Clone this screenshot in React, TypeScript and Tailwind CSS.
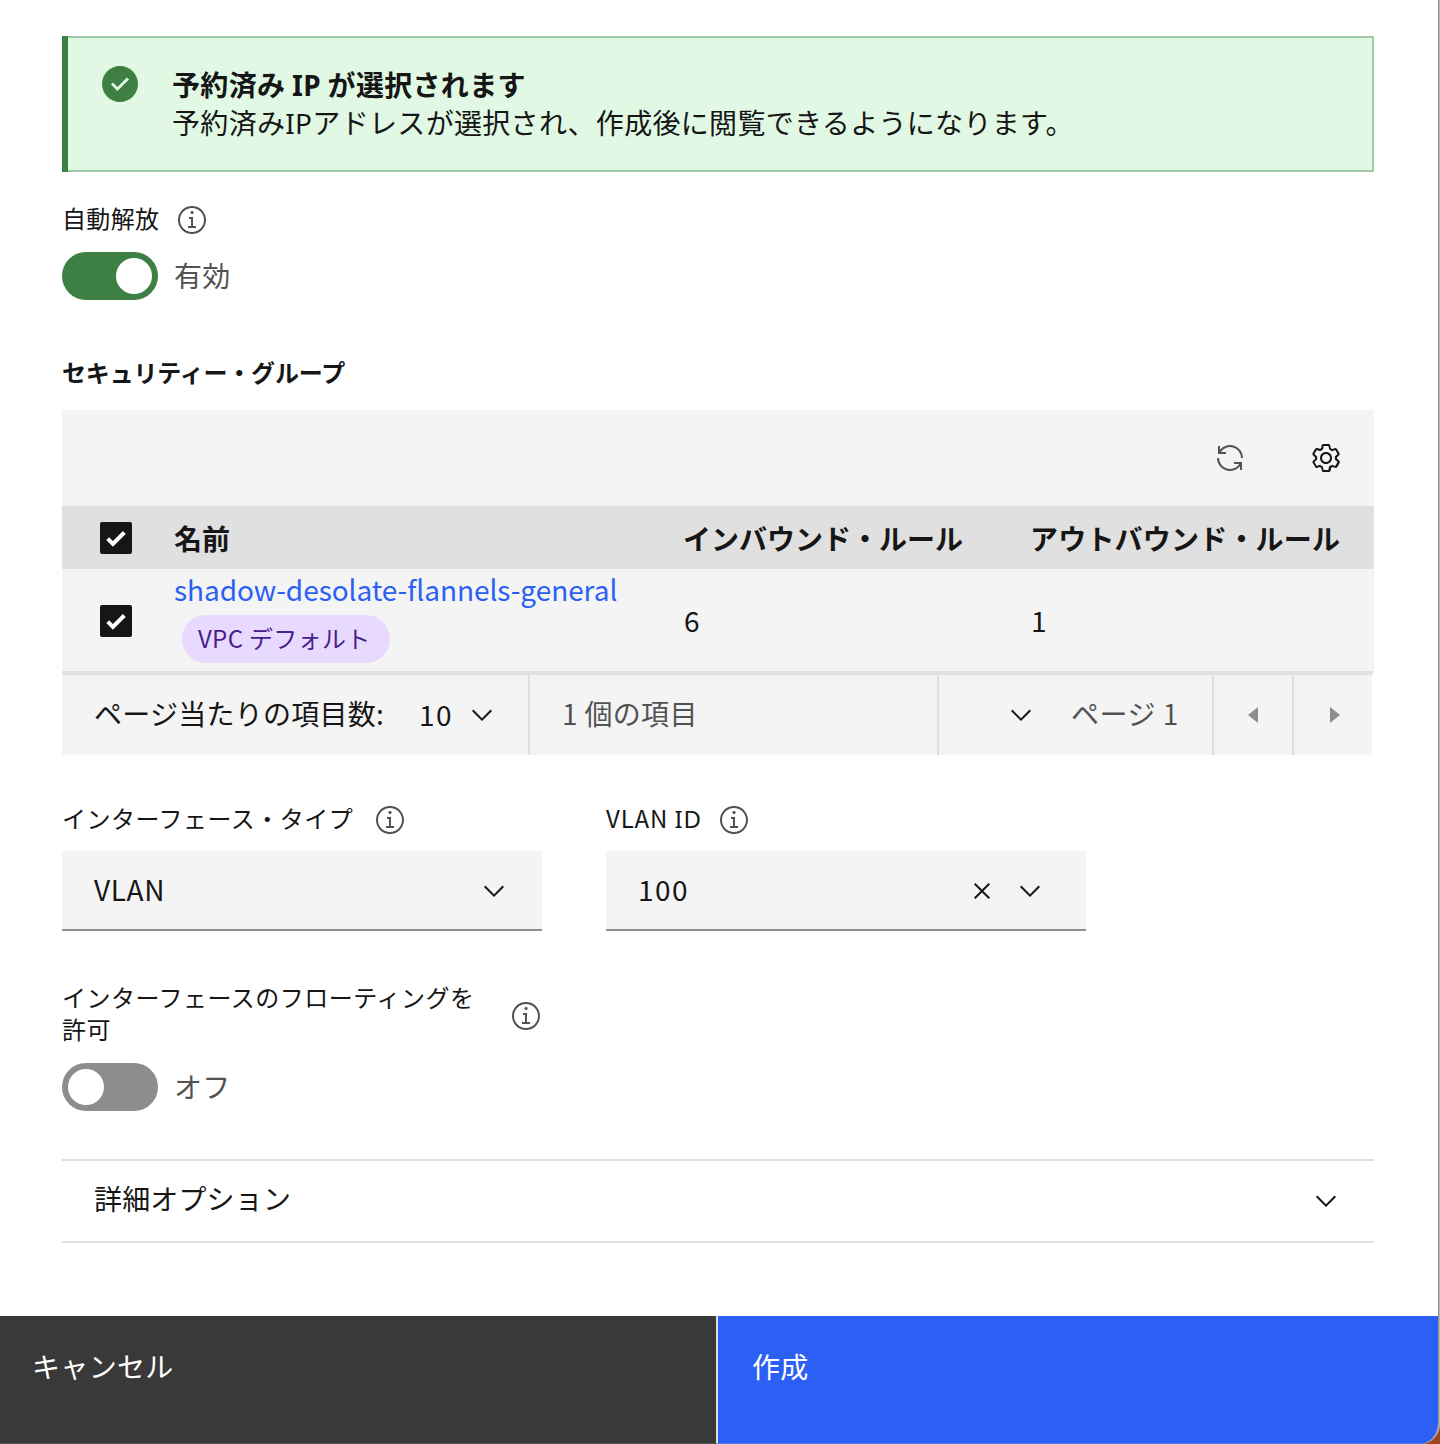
import type { ReactNode } from 'react'

interface IconProps {
  className?: string
}

function Chevron({ className = '' }: IconProps) {
  return (
    <svg className={`h-8 w-8 shrink-0 ${className}`} viewBox="0 0 16 16" fill="currentColor">
      <path d="M8 11L3 6 3.7 5.3 8 9.6 12.3 5.3 13 6z" />
    </svg>
  )
}

function InfoIcon({ className = '' }: IconProps) {
  return (
    <svg className={`h-8 w-8 shrink-0 text-[#525252] ${className}`} viewBox="0 0 16 16" fill="currentColor">
      <path d="M8.5 11L8.5 6.5 6.5 6.5 6.5 7.5 7.5 7.5 7.5 11 6 11 6 12 10 12 10 11zM8 3.5c-.4 0-.8.3-.8.8S7.6 5 8 5c.4 0 .8-.3.8-.8S8.4 3.5 8 3.5z" />
      <path d="M8 15c-3.9 0-7-3.1-7-7s3.1-7 7-7 7 3.1 7 7S11.9 15 8 15zM8 2C4.7 2 2 4.7 2 8s2.7 6 6 6 6-2.7 6-6S11.3 2 8 2z" />
    </svg>
  )
}

function SuccessIcon() {
  return (
    <svg className="h-10 w-10 shrink-0 text-[#3e8043]" viewBox="0 0 20 20" fill="currentColor">
      <path d="M10 1c-4.9 0-9 4.1-9 9s4.1 9 9 9 9-4 9-9-4-9-9-9zM8.7 13.5l-3.2-3.2 1-1 2.2 2.2 4.8-4.8 1 1-5.8 5.8z" />
    </svg>
  )
}

function RenewIcon() {
  return (
    <svg className="h-8 w-8 text-[#525252]" viewBox="0 0 32 32" fill="currentColor">
      <path d="M12 10H6.78A11 11 0 0 1 27 16h2A13 13 0 0 0 6 7.68V4H4v8h8zM20 22h5.22A11 11 0 0 1 5 16H3a13 13 0 0 0 23 8.32V28h2v-8h-8z" />
    </svg>
  )
}

function SettingsIcon() {
  return (
    <svg className="h-8 w-8" viewBox="0 0 16 16" fill="currentColor">
      <path d="M13.5 8.4c0-.1 0-.3 0-.4 0-.1 0-.3 0-.4l1-.8c.4-.3.4-.9.2-1.3l-1.2-2C13.3 3.2 13 3 12.6 3c-.1 0-.2 0-.3.1l-1.2.4c-.2-.1-.4-.3-.7-.4l-.3-1.3C10.1 1.3 9.7 1 9.2 1H6.8c-.5 0-.9.3-1 .8L5.6 3.1C5.3 3.2 5.1 3.3 4.9 3.4L3.7 3C3.6 3 3.5 3 3.4 3 3 3 2.7 3.2 2.5 3.5l-1.2 2C1.1 5.9 1.2 6.4 1.6 6.8l.9.9c0 .1 0 .3 0 .4 0 .1 0 .3 0 .4L1.6 9.2c-.4.3-.5.9-.2 1.3l1.2 2C2.7 12.8 3 13 3.4 13c.1 0 .2 0 .3-.1l1.2-.4c.2.1.4.3.7.4l.3 1.3c.1.5.5.8 1 .8h2.4c.5 0 .9-.3 1-.8l.3-1.3c.2-.1.4-.2.7-.4l1.2.4c.1 0 .2.1.3.1.4 0 .7-.2.9-.5l1.1-2c.2-.4.2-.9-.2-1.3L13.5 8.4zM12.6 12l-1.7-.6c-.4.3-.9.6-1.4.8L9.2 14H6.8l-.4-1.8c-.5-.2-.9-.5-1.4-.8L3.4 12l-1.2-2 1.4-1.2c-.1-.5-.1-1.1 0-1.6L2.2 6l1.2-2 1.7.6C5.5 4.2 6 4 6.5 3.8L6.8 2h2.4l.4 1.8c.5.2.9.5 1.4.8L12.6 4l1.2 2-1.4 1.2c.1.5.1 1.1 0 1.6l1.4 1.2L12.6 12z" />
      <path d="M8 11c-1.7 0-3-1.3-3-3s1.3-3 3-3 3 1.3 3 3-1.3 3-3 3zM8 6c-1.1 0-2 .9-2 2s.9 2 2 2 2-.9 2-2-.9-2-2-2z" />
    </svg>
  )
}

function CloseIcon() {
  return (
    <svg className="h-8 w-8" viewBox="0 0 32 32" fill="currentColor">
      <path d="M17.41 16L24 9.41 22.59 8 16 14.59 9.41 8 8 9.41 14.59 16 8 22.59 9.41 24 16 17.41 22.59 24 24 22.59z" />
    </svg>
  )
}

function Checkbox() {
  return (
    <div className="h-8 w-8 rounded-[2px] bg-[#161616]">
      <svg className="h-8 w-8" viewBox="0 0 32 32" fill="none" stroke="#fff" strokeWidth="4">
        <path d="M7.7 16.7l5.2 5.2L24.3 10.5" />
      </svg>
    </div>
  )
}

function Toggle({ on = false }: { on?: boolean }) {
  return (
    <div className={`flex h-12 w-24 items-center rounded-full px-1.5 ${on ? 'justify-end bg-[#3e8043]' : 'bg-[#8d8d8d]'}`}>
      <div className="h-9 w-9 rounded-full bg-white" />
    </div>
  )
}

function Latin({ children }: { children: ReactNode }) {
  return <span className="font-['Noto_Sans',sans-serif]">{children}</span>
}

export default function App() {
  return (
    <div className="h-[1444px] w-[1440px] bg-[#a0461f] font-['Noto_Sans_CJK_JP',sans-serif] text-[28px] tracking-[0.32px] text-[#161616]">
      <div className="h-full overflow-hidden rounded-br-[20px] border-r border-[#b8b8b8] bg-[#b8b8b8]">
        <div className="flex h-full flex-col overflow-hidden rounded-br-[20px] border-r border-[#8f8f8f] bg-white">
          <main className="flex h-[1316px] flex-col pt-9 pl-[62px]">
            {/* Notification */}
            <div className="flex h-[136px] w-[1312px] bg-[#3e8043] pl-1.5">
              <div className="flex w-full border-2 border-l-0 border-[#a0cba5] bg-[#e1f9e4] pt-[26px] pl-8">
                <SuccessIcon />
                <div className="ml-8 whitespace-nowrap">
                  <div className="h-[38px] font-bold leading-[40px]">
                    予約済み <Latin>IP</Latin> が選択されます
                  </div>
                  <div className="h-[38px] leading-[40px]">
                    予約済み<Latin>IP</Latin>アドレスが選択され、作成後に閲覧できるようになります。
                  </div>
                </div>
              </div>
            </div>

            {/* Auto release */}
            <div className="mt-8 flex h-8 items-center">
              <span className="w-[114px] pb-1 text-2xl leading-8">自動解放</span>
              <InfoIcon />
            </div>
            <div className="mt-4 flex h-12 items-center gap-4 text-[#525252]">
              <Toggle on />
              <span className="pb-0.5">有効</span>
            </div>

            {/* Security groups */}
            <h2 className="mt-14 h-8 text-2xl font-bold leading-8 tracking-[-0.18px]">セキュリティー・グループ</h2>
            <div className="mt-[22px] w-[1312px] bg-[#f4f4f4]">
              <div className="flex h-24 items-center justify-end gap-16 pr-8">
                <RenewIcon />
                <SettingsIcon />
              </div>
              <div className="flex h-[63px] items-center bg-[#e0e0e0] pl-[38px] font-bold">
                <Checkbox />
                <span className="ml-[42px] w-[509px] tracking-normal">名前</span>
                <span className="w-[347px] tracking-normal">インバウンド・ルール</span>
                <span className="tracking-[0.2px]">アウトバウンド・ルール</span>
              </div>
              <div className="flex h-[104px] items-center border-b-2 border-[#e0e0e0] pt-px pl-[38px]">
                <Checkbox />
                <div className="ml-[42px] flex h-full w-[510px] flex-col">
                  <span className="h-[45px] leading-[38px] tracking-[-0.055px] text-[#2c60f5]">
                    shadow-desolate-flannels-general
                  </span>
                  <span className="ml-2 flex h-12 w-[208px] items-center rounded-full bg-[#e8daff] pb-0.5 pl-4 text-2xl text-[#491d8b]">
                    VPC デフォルト
                  </span>
                </div>
                <span className="w-[347px] pb-0.5">6</span>
                <span className="pb-0.5">1</span>
              </div>
            </div>
            <div className="flex h-[82px] w-[1310px] shrink-0 items-center border-t-2 border-[#e0e0e0] bg-[#f4f4f4]">
              <div className="flex h-full w-[468px] items-center border-r-2 border-[#e0e0e0] pl-8">
                <span className="w-[325px] pb-1 tracking-[0.25px]">ページ当たりの項目数:</span>
                <span className="w-[47px] pb-0.5 tracking-[1.4px]">10</span>
                <Chevron />
              </div>
              <div className="flex h-full w-[409px] items-center border-r-2 border-[#e0e0e0] pb-1 pl-8 text-[#525252]">
                1 個の項目
              </div>
              <div className="flex h-full w-[275px] items-center border-r-2 border-[#e0e0e0] pl-[66px]">
                <Chevron />
                <span className="ml-[34px] pb-1 tracking-[0.5px] text-[#525252]">ページ 1</span>
              </div>
              <div className="flex h-full w-20 items-center border-r-2 border-[#e0e0e0] pl-6 text-[#8d8d8d]">
                <svg className="h-8 w-8" viewBox="0 0 32 32" fill="currentColor">
                  <path d="M20 24L10 16 20 8z" />
                </svg>
              </div>
              <div className="flex h-full items-center pl-6 text-[#8d8d8d]">
                <svg className="h-8 w-8" viewBox="0 0 32 32" fill="currentColor">
                  <path d="M12 8L22 16 12 24z" />
                </svg>
              </div>
            </div>

            {/* Interface type and VLAN ID */}
            <div className="mt-[49px] flex gap-16">
              <div className="w-[480px]">
                <div className="flex h-8 items-center">
                  <span className="w-[314px] pb-[5px] text-2xl leading-8 tracking-[0.48px]">インターフェース・タイプ</span>
                  <InfoIcon className="-ml-0.5" />
                </div>
                <div className="mt-[15px] flex h-20 items-center justify-between border-b-2 border-[#8d8d8d] bg-[#f4f4f4] pr-8 pl-8">
                  <span className="pb-0.5 tracking-[0.6px]">VLAN</span>
                  <Chevron className="mt-0.5" />
                </div>
              </div>
              <div className="w-[480px]">
                <div className="flex h-8 items-center">
                  <span className="w-[112px] pb-1 text-2xl leading-8 tracking-[0.85px]">
                    VLAN <Latin>ID</Latin>
                  </span>
                  <InfoIcon />
                </div>
                <div className="mt-[15px] flex h-20 items-center border-b-2 border-[#8d8d8d] bg-[#f4f4f4] pl-8">
                  <span className="w-[328px] pb-0.5 tracking-[1.4px]">100</span>
                  <div className="flex gap-4 pt-0.5">
                    <CloseIcon />
                    <Chevron />
                  </div>
                </div>
              </div>
            </div>

            {/* Floating */}
            <div className="mt-[51px] flex h-16 items-center">
              <span className="w-[448px] pb-[3px] text-2xl leading-8 tracking-[0.5px]">
                インターフェースのフローティングを
                <br />
                許可
              </span>
              <InfoIcon className="mt-1" />
            </div>
            <div className="mt-[17px] flex h-12 items-center gap-4 text-[#525252]">
              <Toggle />
              <span className="pb-[3px]">オフ</span>
            </div>

            {/* Advanced options */}
            <div className="mt-12 flex h-[84px] w-[1312px] items-center justify-between border-y-2 border-[#e0e0e0] pr-8 pl-8">
              <span className="pb-[7px] tracking-[0.15px]">詳細オプション</span>
              <Chevron />
            </div>
          </main>

          <footer className="flex h-32 text-white">
            <button className="flex w-[718px] border-r-2 border-b border-[#e0e0e0] border-b-[#555555] bg-[#393939] pt-[29px] pl-8">
              キャンセル
            </button>
            <button className="flex w-[720px] border-b border-[#4c78f7] bg-[#2c60f5] pt-[29px] pl-[34px]">作成</button>
          </footer>
        </div>
      </div>
    </div>
  )
}
